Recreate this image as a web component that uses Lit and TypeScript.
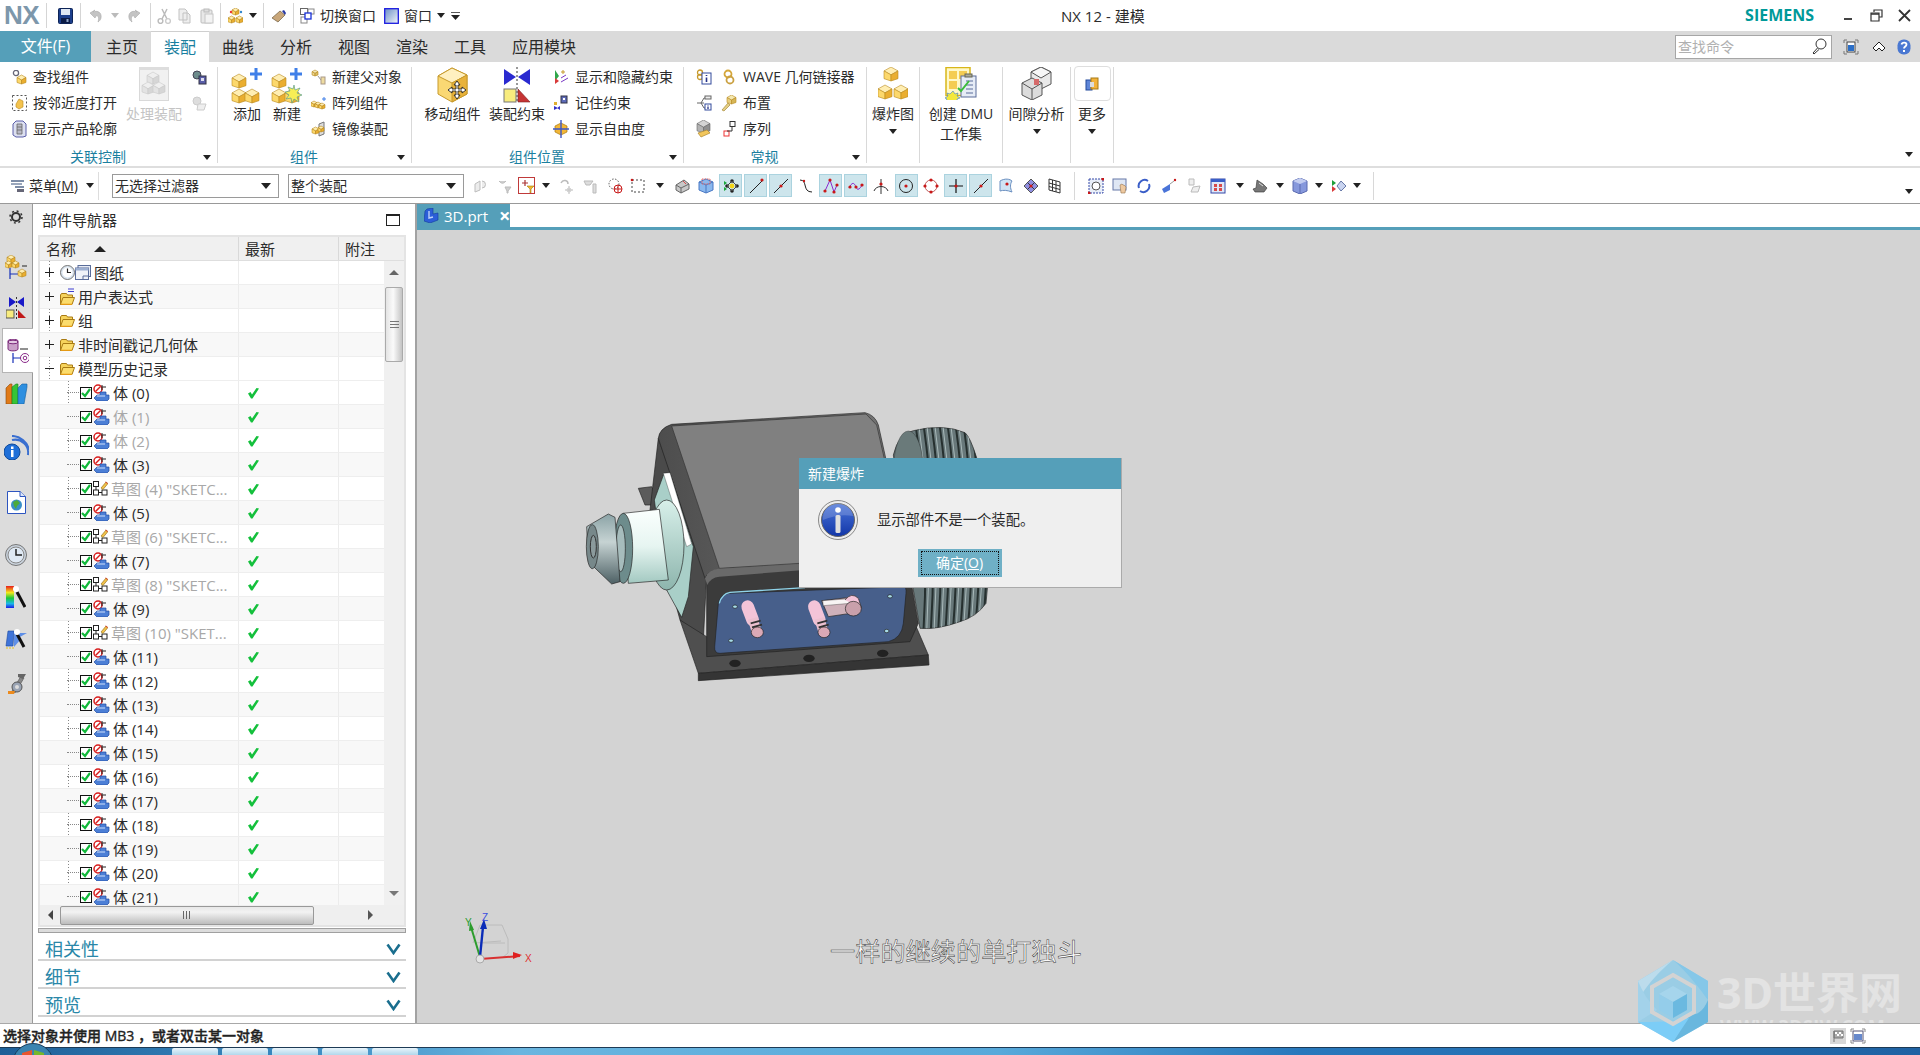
import { LitElement, css, html, svg } from 'lit';
import { customElement } from 'lit/decorators.js';

// --- icon helpers ---------------------------------------------------------
const ico = (w: number, h: number, body: unknown, vb = `0 0 ${w} ${h}`) =>
  html`<svg class="ico" width=${w} height=${h} viewBox=${vb}>${body}</svg>`;

const cube = (x: number, y: number, s: number, top = '#ffeeb2', l = '#fcd86c', r = '#eaae30', edge = '#b98a20') => {
  const h = s * 0.28;
  return svg`
    <polygon points=${`${x},${y + h} ${x + s / 2},${y} ${x + s},${y + h} ${x + s / 2},${y + 2 * h}`} fill=${top} stroke=${edge} stroke-width=".6"/>
    <polygon points=${`${x},${y + h} ${x + s / 2},${y + 2 * h} ${x + s / 2},${y + s} ${x},${y + s - h * 0.6}`} fill=${l} stroke=${edge} stroke-width=".6"/>
    <polygon points=${`${x + s},${y + h} ${x + s / 2},${y + 2 * h} ${x + s / 2},${y + s} ${x + s},${y + s - h * 0.6}`} fill=${r} stroke=${edge} stroke-width=".6"/>`;
};
const plus = (x: number, y: number, s = 10) =>
  svg`<path d=${`M${x - s / 2} ${y}H${x + s / 2}M${x} ${y - s / 2}V${y + s / 2}`} stroke="#3f7fe8" stroke-width="3"/>`;

const I = {
  save: ico(15, 16, svg`<rect x=".5" y=".5" width="14" height="15" rx="1" fill="#1c3f8c" stroke="#0e2456"/><rect x="3" y="1" width="9" height="6" fill="#dfe8f4"/><rect x="3" y="10" width="9" height="5" fill="#0b1b45"/><rect x="8.5" y="11" width="2" height="3" fill="#8fa5c8"/>`),
  undo: ico(14, 14, svg`<path d="M4 3C9 1 13 4 12 9c-.4 1.800-1.500 3-3 4 1-3 1-6-1.500-6.500L6 9 1 4l5-3z" fill="#c4c4c4" stroke="#aaa" stroke-width=".6"/>`),
  redo: ico(13, 14, svg`<path d="M9 3C4 1 0 4 1 9c.4 1.800 1.500 3 3 4-1-3-1-6 1.500-6.500L7 9l5-5-5-3z" fill="#c4c4c4" stroke="#aaa" stroke-width=".6"/>`),
  cut: ico(14, 16, svg`<path d="M10 1 5 11M5 1l5 10" stroke="#bbb" stroke-width="1.500"/><circle cx="3.500" cy="13" r="2.400" fill="none" stroke="#bbb" stroke-width="1.400"/><circle cx="11" cy="13" r="2.400" fill="none" stroke="#ccc" stroke-width="1.400"/>`),
  copy: ico(13, 16, svg`<path d="M1 1h6l2 2v9H1zM5 5h5l2 2v8H5z" fill="#eee" stroke="#c2c2c2"/>`),
  paste: ico(14, 16, svg`<rect x="1" y="2" width="11" height="13" rx="1" fill="#e8e8e8" stroke="#bdbdbd"/><rect x="4" y="1" width="5" height="3" fill="#ddd" stroke="#bbb"/><rect x="5" y="6" width="8" height="9" fill="#f3f3f3" stroke="#c6c6c6"/>`),
  cubes: ico(15, 16, svg`${cube(4, 0, 7)}${cube(0, 8, 7)}${cube(8, 8, 7)}<circle cx="3" cy="4" r="1.200" fill="#e33"/><circle cx="13" cy="4" r="1.200" fill="#38c"/>`),
  brush: ico(16, 14, svg`<path d="M1 9 9 2l5 4-7 7z" fill="#c9a77a" stroke="#6e5b3f" stroke-width=".7"/><path d="M11 2l2-1 2 3-1 2z" fill="#2738a5"/>`),
  switchWin: ico(15, 16, svg`<rect x=".5" y=".5" width="7" height="6" fill="#fff" stroke="#666"/><rect x="8" y="1" width="6" height="5" fill="#fff" stroke="#888"/><rect x="1" y="9" width="6" height="6" fill="#fff" stroke="#888"/><rect x="5" y="5" width="6" height="6" fill="#fff" stroke="#1730d8" stroke-width="1.300"/>`),
  window: html`<svg class="ico" width="15" height="16" viewBox="0 0 15 16"><defs><linearGradient id="wg" x1="0" y1="0" x2="1" y2="1"><stop offset="0" stop-color="#6b8fc6"/><stop offset="1" stop-color="#f3f7fb"/></linearGradient></defs><rect x=".7" y=".7" width="13.600" height="14.600" fill="url(#wg)" stroke="#1a1ae0" stroke-width="1.300"/></svg>`,

  find: ico(15, 15, svg`<circle cx="4" cy="3" r="2.600" fill="none" stroke="#667" stroke-width="1.300"/>${cube(5, 5, 9)}`),
  openProx: ico(15, 16, svg`<rect x=".5" y=".5" width="14" height="15" fill="none" stroke="#555" stroke-dasharray="2 2"/><path d="M4 9 7 4l4 2v6l-4 2-3-2z" fill="#f4c34f" stroke="#b98a20" stroke-width=".6"/>`),
  profile: ico(15, 18, svg`<path d="M4 1h7l3 3v12l-3 1H4l-3-2V4z" fill="#dcdff0" stroke="#5a5ea8"/><path d="M5 4h5v10H5zM5 7h5M5 10h5" fill="#b8b8c6" stroke="#666" stroke-width=".8"/>`),
  processBig: ico(30, 34, svg`<rect x=".5" y=".5" width="29" height="33" fill="#f1f1f1" stroke="#d9d9d9"/><rect x="0" y="0" width="30" height="3" fill="#ddd"/>${cube(8, 5, 12, '#efefef', '#e3e3e3', '#d6d6d6', '#c9c9c9')}${cube(3, 15, 12, '#efefef', '#e3e3e3', '#d6d6d6', '#c9c9c9')}${cube(14, 15, 12, '#efefef', '#e3e3e3', '#d6d6d6', '#c9c9c9')}`),
  navCam: ico(15, 15, svg`<circle cx="5" cy="5" r="4" fill="#6d8c8c" stroke="#445"/><rect x="7" y="6" width="7" height="8" fill="#5a5ea8" stroke="#334"/><rect x="9" y="8" width="3" height="3" fill="#dde"/>`),
  navDis: ico(15, 15, svg`<circle cx="5" cy="5" r="4" fill="#ddd" stroke="#ccc"/><path d="M6 8h8l-2 6H5z" fill="#eee" stroke="#ccc"/>`),
  add: ico(32, 38, svg`${cube(1, 7, 14)}${cube(1, 22, 14)}${cube(14, 22, 14)}${plus(25, 7, 12)}`, '0 0 32 38'),
  newComp: ico(32, 38, svg`${cube(1, 7, 14)}${cube(1, 22, 14)}${cube(14, 22, 14)}${plus(25, 7, 12)}<path d="M23 18l1 5 5-2-3 5 5 2-5 2 2 5-5-3-2 4-1-5-5 1 3-4-4-3 5-1-2-4 5 2z" fill="#f7ee55" stroke="#5f9f8f" stroke-width=".7"/>`, '0 0 32 38'),
  newParent: ico(15, 16, svg`${cube(1, 1, 6, '#f4e9b8', '#ead48a', '#d9bc62')}<path d="M7 7l6 8" stroke="#999"/><rect x="10" y="8" width="4" height="7" fill="#eedca0" stroke="#a98"/>`),
  array: ico(15, 14, svg`${cube(0, 5, 6)}${cube(4, 6, 6)}${cube(8, 7, 6)}<path d="M11 3h4M13 1v4" stroke="#3f7fe8"/>`),
  mirror: ico(15, 16, svg`<path d="M8 3l5-2v12l-5 2z" fill="#ddd" stroke="#777"/>${cube(1, 6, 7)}${cube(7, 5, 6)}`),
  move: ico(32, 36, svg`<polygon points="15,1 30,8 30,27 15,35 1,27 1,9" fill="#fad873" stroke="#c79a2c"/><polygon points="15,1 30,8 15,16 1,9" fill="#fff0c0" stroke="#c79a2c"/><polygon points="15,16 30,8 30,27 15,35" fill="#e8b23a" stroke="#c79a2c"/><path d="M20 14l3 4h-2v4h4v-2l4 3-4 3v-2h-4v4h2l-3 4-3-4h2v-4h-4v2l-4-3 4-3v2h4v-4h-2z" fill="#fff" stroke="#222" stroke-width=".9"/>`),
  constrain: ico(28, 36, svg`<path d="M1 2l12 8L1 18zM27 2 15 10l12 8z" fill="#2a2ad0"/><path d="M14 0v36" stroke="#333" stroke-dasharray="2 2"/><rect x="1" y="22" width="12" height="13" fill="#f8ec7e" stroke="#777"/><path d="M15 22l12 13H15z" fill="#c63434" stroke="#7c2222" stroke-width=".6"/>`),
  showHide: ico(16, 16, svg`<path d="M2 1v11l4-5z" fill="#2fa64a"/><path d="M2 15V9l4 3z" fill="#d83a3a"/><path d="M8 9l5-3M8 13l7-4" stroke="#7a39c5"/><path d="M10 1v4M8 3h4" stroke="#c79a2c"/>`),
  remember: ico(16, 16, svg`<rect x="8" y="1" width="6" height="7" fill="#5c6ab8" stroke="#334"/><rect x="10" y="3" width="2" height="2" fill="#fff"/><path d="M1 11l4 2-4 2zM7 11l-3 2 3 2z" fill="#3434c8"/><rect x="1" y="7" width="3" height="3" fill="#e0b030"/>`),
  dof: ico(16, 18, svg`<polygon points="8,3 14,6 14,12 8,15 2,12 2,6" fill="#f2b636" stroke="#a97a10" stroke-width=".7"/><path d="M8 0v18M0 9h16" stroke="#3d57c8" stroke-width="1.400"/>`),
  waveInfo: ico(16, 16, svg`<circle cx="4" cy="3.500" r="2.500" fill="none" stroke="#c79a2c" stroke-width="1.300"/><circle cx="4" cy="8" r="2.500" fill="none" stroke="#c79a2c" stroke-width="1.300"/><rect x="6" y="4" width="9" height="11" fill="#fff" stroke="#334a9c"/><path d="M10.500 6v1M10.500 8.500V13" stroke="#26338a" stroke-width="1.600"/>`),
  waveLink: ico(14, 17, svg`<circle cx="6" cy="5" r="3.500" fill="none" stroke="#d4a63a" stroke-width="1.800"/><circle cx="8" cy="11" r="3.500" fill="none" stroke="#caa040" stroke-width="1.800"/>`),
  treeInfo: ico(16, 16, svg`<path d="M1 8h7M5 8l3-5h3M5 8l3 5h2" stroke="#666" fill="none"/><rect x="9" y="1" width="6" height="3" fill="#eee" stroke="#666"/><rect x="9" y="9" width="6" height="6" fill="#fff" stroke="#334a9c"/><path d="M12 10.500v1M12 12v2" stroke="#26338a" stroke-width="1.300"/>`),
  layout: ico(16, 17, svg`${cube(6, 0, 9, '#f4e8b0', '#e9cf7e', '#d6b656')}<path d="M1 15 7 8l2 2-6 6z" fill="#e5cf85" stroke="#a98c3a" stroke-width=".7"/>`),
  seqBox: ico(16, 18, svg`${cube(1, 0, 13, '#d4d4d4', '#b3b3b3', '#8f8f8f', '#666')}<path d="M2 13l9-3 3 3-9 4z" fill="#f2c65c" stroke="#b08a2c" stroke-width=".7"/>`),
  seq: ico(13, 16, svg`<rect x="7" y=".5" width="5" height="5" fill="#fff" stroke="#333"/><rect x="1" y="10" width="5" height="5" fill="#fff" stroke="#e33"/><path d="M9 6v4H4" fill="none" stroke="#333"/>`),
  explode: ico(30, 33, svg`${cube(6, 0, 14)}${cube(0, 18, 14)}${cube(16, 18, 14)}`),
  dmu: ico(33, 33, svg`<rect x="1" y=".5" width="24" height="28" fill="#fff8c8" stroke="#d8b61a" stroke-width="1.500"/><rect x="4" y="4" width="8" height="8" fill="#f4cc52"/><rect x="14" y="4" width="8" height="8" fill="#f4cc52"/><rect x="4" y="14" width="8" height="8" fill="#f4cc52"/><rect x="16" y="9" width="15" height="21" fill="#e6ecf6" stroke="#5a6d9a"/><rect x="20" y="7" width="7" height="3" fill="#aa9" stroke="#665"/><path d="M21 14h7M21 18h7M21 22h7M21 26h7" stroke="#5a6d9a"/><path d="M8 24l2 3 3-1-1 3 3 2-3 1 1 3H0l2-3-2-1 3-2-1-3 3 1z" fill="#f3e83c" stroke="#3a7fd0" stroke-width=".6"/><path d="M13 21l3 3 8-10" fill="none" stroke="#3bbd3b" stroke-width="2"/>`),
  clearance: ico(31, 33, svg`<polygon points="20,0 30,5 30,17 20,22 10,17 10,5" fill="#e9e9e9" stroke="#555"/><polygon points="20,11 30,5 20,0 10,5" fill="#f7f7f7" stroke="#555"/><polygon points="11,11 21,16 21,28 11,33 1,28 1,16" fill="#dcdcdc" stroke="#555"/><path d="M11 22V33M11 22l10-6M11 22 1 16" stroke="#555"/><rect x="13" y="12" width="5" height="6" fill="#d56a6a"/>`),
  more: ico(14, 14, svg`<rect x="1" y="3" width="6" height="10" fill="#5f86d8" stroke="#234a9c"/><rect x="6" y="1" width="7" height="11" fill="#f3b23a" stroke="#a87a14"/><rect x="5" y="5" width="4" height="5" fill="#ddd"/>`),
  menu: ico(15, 14, svg`<rect x="1" y="1" width="13" height="2" fill="#7e8ea8"/><rect x="1" y="4" width="11" height="2" fill="#9aa7bc"/><rect x="5" y="7" width="9" height="2" fill="#7e8ea8"/><rect x="7" y="10" width="7" height="3" fill="#667"/>`),

  // navigator tree
  clock: ico(15, 15, svg`<circle cx="7.500" cy="7.500" r="7" fill="#d9e4ef" stroke="#777"/><circle cx="7.500" cy="7.500" r="5" fill="#fff"/><path d="M7.500 3.500v4H11" stroke="#222" fill="none" stroke-width="1.200"/>`),
  sheet: ico(16, 15, svg`<rect x="3" y=".5" width="12.500" height="11" fill="#e6ebf5" stroke="#5a6d9a"/><rect x=".5" y="3" width="13" height="11.500" fill="#f0f3f9" stroke="#5a6d9a"/><rect x=".5" y="3" width="13" height="2.500" fill="#9db0d2"/><path d="M8 11h5M8 11v3" stroke="#5a6d9a"/>`),
  folder: ico(15, 13, svg`<path d="M.5 12.500V3l1-1.500h5l1 1.500h5v2" fill="#f6d35c" stroke="#a87a14"/><path d="M.5 12.500 3 5.500h11.500l-2.500 7z" fill="#fbdc6c" stroke="#a87a14"/><path d="M1 12.500h11" stroke="#e59a14" stroke-width="1.500"/>`),
  folderExpr: ico(15, 17, svg`<path d="M8 1h6M8 3.500h6" stroke="#3f3fd0"/><g transform="translate(0 4)"><path d="M.5 12.500V3l1-1.500h5l1 1.500h5v2" fill="#f6d35c" stroke="#a87a14"/><path d="M.5 12.500 3 5.500h11.500l-2.500 7z" fill="#fbdc6c" stroke="#a87a14"/><path d="M1 12.500h11" stroke="#e59a14" stroke-width="1.500"/></g>`),
  checkBox: ico(12, 12, svg`<rect x=".5" y=".5" width="11" height="11" fill="#fff" stroke="#111"/><path d="M2 6l3 3 5-7" fill="none" stroke="#11b93a" stroke-width="2.200"/>`),
  body: ico(17, 17, svg`<circle cx="5" cy="5" r="4" fill="#fff" stroke="#d81e1e" stroke-width="1.500"/><path d="M2.500 7.500l5-5" stroke="#d81e1e" stroke-width="1.500"/><path d="M9 1v5M9 3h4" stroke="#222"/><path d="M7 8h6v3h3v4l-2 2H4l-3-3 3-3h3z" fill="#4c7fd6" stroke="#1f4aa0" stroke-width=".7"/><path d="M4 12h8" stroke="#cfe0fa"/>`),
  sketch: ico(15, 15, svg`<rect x=".5" y=".5" width="5" height="5" fill="#fff" stroke="#222"/><rect x=".5" y="9" width="5" height="5" fill="#fff" stroke="#222"/><rect x="9" y="9" width="5" height="5" fill="#fff" stroke="#222"/><path d="M3 6v3M6 11.500h3" stroke="#222"/><path d="M8 7l5-6 2 1.500-5 6z" fill="#f2c14a" stroke="#8a6a14" stroke-width=".6"/><path d="M12.500 1l2 1.500" stroke="#d33"/>`),
  ok: ico(12, 12, svg`<path d="M1 6.500l2.500-1.500L5 7.500 9.500 1 12 1.500 5.500 11.500H4z" fill="#14c03c"/>`),

  // left rail
  gear: ico(14, 14, svg`<circle cx="7" cy="7" r="4" fill="none" stroke="#333" stroke-width="2"/><circle cx="7" cy="7" r="6" fill="none" stroke="#333" stroke-width="1.500" stroke-dasharray="2 2.700"/>`),
  railAsm: ico(22, 24, svg`${cube(2, 0, 8)}${cube(0, 6, 7)}${cube(7, 6, 7)}<path d="M17 11h5" stroke="#222"/><path d="M5 13v11M5 19h8" stroke="#1730b8" stroke-width="1.200"/>${cube(13, 14, 8)}`),
  railCon: ico(21, 22, svg`<path d="M3 0l7 5-7 5zM18 0l-7 5 7 5z" fill="#1818c8"/><path d="M10.500 0v22" stroke="#333" stroke-dasharray="2 2"/><rect x="0" y="13" width="8" height="8" fill="#f8ec7e" stroke="#555"/><path d="M12 13l8 8h-8z" fill="#c01818"/>`),
  railPart: ico(22, 24, svg`<path d="M1 2c0-2.500 10-2.500 10 0v8c0 2.500-10 2.500-10 0z" fill="#c9a0c8" stroke="#7a2a7a"/><ellipse cx="6" cy="3" rx="5" ry="1.800" fill="#e2c9e2" stroke="#7a2a7a"/><path d="M13 10h8" stroke="#222"/><path d="M6 14v10M6 19h8" stroke="#1730b8" stroke-width="1.200"/><circle cx="18" cy="19" r="4.500" fill="#fff" stroke="#8a2a8a"/><circle cx="18" cy="19" r="1.800" fill="none" stroke="#8a2a8a"/>`),
  books: ico(23, 21, svg`<path d="M1 5 5 1h2v20H1z" fill="#e07a18" stroke="#8a4a0e" stroke-width=".6"/><path d="M7 4 11 1h2v20H7z" fill="#36c436" stroke="#1c7c1c" stroke-width=".6"/><path d="M13 5 17 1h5v3l-3 17h-6z" fill="#2e8fe0" stroke="#14609e" stroke-width=".6"/>`),
  infoWifi: ico(25, 25, svg`<path d="M8 5A13 13 0 0 1 24 20M8 1A18 18 0 0 1 25 15" fill="none" stroke="#3a6fd0" stroke-width="2.200"/><circle cx="8" cy="17" r="8" fill="#1f6fd8" stroke="#0f4a9a"/><rect x="7" y="15" width="2.500" height="7" fill="#fff"/><rect x="7" y="11.500" width="2.500" height="2.500" fill="#fff"/>`),
  pageGlobe: ico(19, 23, svg`<path d="M.5.5H13l5.500 5V22.500H.5z" fill="#fff" stroke="#2d55c0"/><path d="M13 .5v5h5.500" fill="#dbe6fa" stroke="#2d55c0"/><circle cx="9.500" cy="14" r="5.500" fill="#3a8fc8"/><path d="M6 11l4-2 3 3-3 3-1 3-2-3z" fill="#4caa3a"/>`),
  railClock: ico(22, 22, svg`<circle cx="11" cy="11" r="10.500" fill="#c9d2dc" stroke="#777"/><circle cx="11" cy="11" r="8" fill="#dfe9f4" stroke="#888"/><path d="M11 5v6h6" fill="none" stroke="#222" stroke-width="1.500"/>`),
  railColor: html`<svg class="ico" width="20" height="23" viewBox="0 0 20 23"><defs><linearGradient id="rb" x1="0" y1="0" x2="0" y2="1"><stop offset="0" stop-color="#e81c1c"/><stop offset=".3" stop-color="#f4e81c"/><stop offset=".55" stop-color="#1cc83a"/><stop offset=".8" stop-color="#1cb8e8"/><stop offset="1" stop-color="#1c1ce8"/></linearGradient></defs><rect x="0" y="0" width="8" height="22" fill="url(#rb)"/><path d="M11 6l8 15" stroke="#111" stroke-width="3"/><circle cx="10" cy="3" r="3" fill="#fff"/></svg>`,
  railWizard: ico(23, 22, svg`<path d="M3 3h6L8 18H1z" fill="#3f74d8" stroke="#1d49a0" stroke-width=".6"/><path d="M9 5h13l-9 5 3 1-7 8z" fill="#5f8fe6"/><path d="M12 6l7 13" stroke="#111" stroke-width="3"/><circle cx="12" cy="4" r="3" fill="#fff"/><path d="M1 20h8" stroke="#e3c020" stroke-dasharray="2 1"/>`),
  railTools: ico(19, 22, svg`<path d="M5 18 14 3l3 2-9 15z" fill="#888" stroke="#444" stroke-width=".5"/><path d="M11 1h8l-3 5-5-2z" fill="#666"/><circle cx="10" cy="14" r="5" fill="#9aa4b4" stroke="#555"/><circle cx="10" cy="14" r="2" fill="#dcdcdc"/><path d="M1 18h7l-1 3H1z" fill="#ec8a1c"/>`),
  tabPart: ico(15, 15, svg`<path d="M3 1 9 0v6l5-1v7l-8 3-6-2 1-10z" fill="#2c5ed8" stroke="#123a9e" stroke-width=".6"/><path d="M5 3v7l4-1" fill="none" stroke="#bcd0fa" stroke-width="1.400"/>`),
};

// toolbar glyphs, all in a 16 box
const tb = (b: unknown) => ico(16, 16, b);
const red = (x: number, y: number, r = 1.600) => svg`<circle cx=${x} cy=${y} r=${r} fill="#c81818"/>`;
const T = {
  g1: tb(svg`<path d="M2 6l5-3v9l-5 2zM9 3a3 3 0 1 1 0 7" fill="#ececec" stroke="#bdbdbd"/>`),
  g2: tb(svg`<path d="M2 3c3 3 4 3 7 0M8 9h6l-3 4v2h-1v-2z" fill="#cfcfcf" stroke="#bbb"/>`),
  filt: tb(svg`<path d="M6 2v6M3 5h6" stroke="#a33" stroke-width="1.200"/><path d="M8 8h7l-3 3v4h-1v-4z" fill="#f2b92c" stroke="#a87a14" stroke-width=".6"/>`),
  g3: tb(svg`<path d="M3 5c2-4 7-3 7 1" fill="none" stroke="#bbb" stroke-width="1.500"/><path d="M11 8v8M7 12h8" stroke="#bbb"/><circle cx="11" cy="12" r="2" fill="none" stroke="#ccc"/>`),
  g4: tb(svg`<path d="M2 3h9l-3 4H4zM11 6h3v9h-3z" fill="#ddd" stroke="#bbb"/>`),
  g5: tb(svg`<circle cx="7" cy="6" r="5" fill="none" stroke="#555" stroke-dasharray="1.500 1.500"/><circle cx="11" cy="11" r="4" fill="none" stroke="#c81818"/><path d="M7 11h8M11 7v8" stroke="#c81818"/>`),
  rect: tb(svg`<rect x="2" y="2" width="12" height="12" fill="none" stroke="#444" stroke-dasharray="2 2"/><circle cx="2" cy="2" r="1.300" fill="#c81818"/>`),
  solid: tb(svg`<path d="M2 7 10 2l5 4v5l-8 4-5-3z" fill="#c8c8c8" stroke="#666"/><path d="M2 7l5 3 8-4M7 10v5" stroke="#666" fill="none"/><path d="M9 3l3 3" stroke="#d84a4a"/>`),
  blue: tb(svg`<polygon points="8,1 15,4 15,12 8,15 1,12 1,4" fill="#8ab8ee" stroke="#4a78c4"/><path d="M1 4l7 3 7-3M8 7v8" stroke="#4a78c4" fill="none"/><rect x="4" y="1" width="8" height="5" fill="none" stroke="#e36a6a" stroke-dasharray="1.500 1"/>`),
  snap1: tb(svg`<path d="M1 3v4l3-2zM1 13V9l3 2z" fill="#18a838"/><circle cx="9" cy="3" r="1.800" fill="#222"/><circle cx="9" cy="13" r="1.800" fill="#222"/><circle cx="4" cy="8" r="1.800" fill="#222"/><circle cx="14" cy="8" r="1.800" fill="#222"/><circle cx="9" cy="8" r="2.400" fill="#f2d418"/><path d="M9 3l5 5-5 5-5-5z" fill="none" stroke="#444"/>`),
  lineEnd: tb(svg`<path d="M2 15 14 3" stroke="#222"/>${red(14, 2)}`),
  lineMid: tb(svg`<path d="M1 15 15 1" stroke="#222"/>${red(8, 8)}`),
  curve: tb(svg`<path d="M2 2c8 0 2 12 12 12" fill="none" stroke="#222"/>${red(6, 3, 1.200)}`),
  poly: tb(svg`<path d="M2 13 7 2l4 12 3-7" fill="none" stroke="#8a2ad0"/>${red(2, 13)}${red(7, 2)}${red(11, 14)}${red(14, 7)}`),
  spline: tb(svg`<path d="M1 10c3-6 5-6 7-1s4 1 7-3" fill="none" stroke="#8a2ad0"/>${red(2, 9)}${red(8, 9)}${red(14, 7)}`),
  tan: tb(svg`<path d="M1 13c2-6 12-6 14 0M8 1v15" fill="none" stroke="#333"/>${red(8, 6)}`),
  center: tb(svg`<circle cx="8" cy="8" r="6.500" fill="none" stroke="#222"/>${red(8, 8)}`),
  circ: tb(svg`<circle cx="8" cy="8" r="6" fill="none" stroke="#c05a5a"/>${red(8, 2)}${red(8, 14)}${red(2, 8)}${red(14, 8)}`),
  cross: tb(svg`<path d="M8 1v14M1 8h14" stroke="#111" stroke-width="1.200"/>${red(8, 8)}`),
  face: tb(svg`<path d="M2 3c5-3 10-2 12 0-2 3-2 7 0 11-5-2-9-2-12-1z" fill="#cfe3f4" stroke="#6a8fc0"/>${red(9, 6)}`),
  mesh: tb(svg`<polygon points="8,1 15,8 8,15 1,8" fill="#8f8fe0" stroke="#555"/><path d="M4.500 4.500l7 7M11.500 4.500l-7 7" stroke="#334"/>${red(8, 8)}`),
  grid: tb(svg`<path d="M3 1l11 3v11L3 12zM6.500 2v11M10 3v11M3 5l11 3M3 8.500l11 3" fill="none" stroke="#333"/>`),
  zoomFit: tb(svg`<rect x="1" y="1" width="14" height="14" fill="#e8eef8" stroke="#3448a8" stroke-dasharray="2 1"/><circle cx="8" cy="8" r="4" fill="#fff" stroke="#555"/>${red(1, 15)}${red(15, 1)}`),
  pan: tb(svg`<rect x="1" y="1" width="13" height="11" fill="#dfe7f4" stroke="#6678a8"/><path d="M8 7l2-1 1 1 1 0 2 2-1 6H9z" fill="#eec9a0" stroke="#96744e" stroke-width=".6"/>`),
  rot: tb(svg`<path d="M3 10a6 6 0 0 1 9-7M13 6a6 6 0 0 1-9 7" fill="none" stroke="#3a5ec8" stroke-width="2"/>`),
  persp: tb(svg`<path d="M1 11l8-5v6l-6 3z" fill="#4a74d8"/><path d="M9 6l4-3" stroke="#999"/>${red(14, 2, 1.200)}`),
  lite: tb(svg`<path d="M3 1h5v6H3zM7 9l7-1-2 6H5z" fill="#eee" stroke="#bbb"/><path d="M5 3v0M5 5v0" stroke="#999"/>`),
  layer: tb(svg`<rect x="1" y="1" width="14" height="14" fill="#dfe7f8" stroke="#3448a8"/><rect x="1" y="1" width="14" height="3" fill="#3a5ec8"/><rect x="4" y="6" width="3" height="3" fill="#d84a4a"/><rect x="9" y="6" width="3" height="3" fill="#d84a4a"/><rect x="4" y="10" width="3" height="3" fill="#d84a4a"/><rect x="9" y="10" width="3" height="3" fill="#d84a4a"/>`),
  shade: tb(svg`<path d="M5 2l6 4 4 4-3 4H3l-2-3 3-1z" fill="#777" stroke="#333" stroke-width=".6"/><path d="M7 5l4 3" stroke="#ddd"/>`),
  boxBlue: tb(svg`<polygon points="8,0 15,3 15,13 8,16 1,13 1,3" fill="#8698dc" stroke="#5a6ab0"/><polygon points="8,0 15,3 8,6 1,3" fill="#c3cdf0"/><path d="M8 6v10" stroke="#5a6ab0"/>`),
  dyn: tb(svg`<path d="M1 2v6l4-3z" fill="#1f9f3a"/><path d="M1 14V8l4 3z" fill="#d83a3a"/><polygon points="10,3 15,8 10,13 6,8" fill="#c9d4f0" stroke="#6678a8"/>`),
};

type TbItem = { x: number; icon?: unknown; hl?: boolean; boxed?: boolean; caret?: boolean; sep?: boolean };

const TOOLBAR: TbItem[] = [
  { x: 480, icon: T.g1 }, { x: 506, icon: T.g2 }, { x: 528, icon: T.filt, boxed: true }, { x: 545, caret: true },
  { x: 565, icon: T.g3 }, { x: 590, icon: T.g4 }, { x: 615, icon: T.g5 }, { x: 639, icon: T.rect }, { x: 659, caret: true },
  { x: 681, icon: T.solid }, { x: 705, icon: T.blue }, { x: 731, icon: T.snap1, hl: true }, { x: 755, icon: T.lineEnd, hl: true },
  { x: 781, icon: T.lineMid, hl: true }, { x: 805, icon: T.curve }, { x: 831, icon: T.poly, hl: true }, { x: 855, icon: T.spline, hl: true },
  { x: 882, icon: T.tan }, { x: 906, icon: T.center, hl: true }, { x: 931, icon: T.circ }, { x: 955, icon: T.cross, hl: true },
  { x: 981, icon: T.lineMid, hl: true }, { x: 1005, icon: T.face }, { x: 1031, icon: T.mesh }, { x: 1055, icon: T.grid },
  { x: 1075, sep: true }, { x: 1094, icon: T.zoomFit }, { x: 1120, icon: T.pan }, { x: 1144, icon: T.rot }, { x: 1169, icon: T.persp },
  { x: 1193, icon: T.lite }, { x: 1220, icon: T.layer }, { x: 1239, caret: true }, { x: 1260, icon: T.shade }, { x: 1280, caret: true },
  { x: 1300, icon: T.boxBlue }, { x: 1319, caret: true }, { x: 1339, icon: T.dyn }, { x: 1358, caret: true }, { x: 1373, sep: true },
];

type Row = { label: string; kind: 'body' | 'sketch'; dim?: boolean };
const ROWS: Row[] = Array.from({ length: 22 }, (_, n): Row => {
  if (n === 4 || n === 6 || n === 8) return { label: `草图 (${n}) "SKETC...`, kind: 'sketch', dim: true };
  if (n === 10) return { label: '草图 (10) "SKET...', kind: 'sketch', dim: true };
  return { label: `体 (${n})`, kind: 'body', dim: n === 1 || n === 2 };
});

const TABS = ['主页', '装配', '曲线', '分析', '视图', '渲染', '工具', '应用模块'];

@customElement('app-root')
export class AppRoot extends LitElement {
  static override styles = css`
    :host {
      display: block;
      position: relative;
      width: 1920px;
      height: 1055px;
      overflow: hidden;
      background: #fff;
      font-family: 'Open Sans', 'Noto Sans CJK SC', sans-serif;
      font-size: 14px;
      line-height: 20px;
      color: #2b2b2b;
    }
    .ico { display: block; flex: none; }
    .caret {
      display: block;
      flex: none;
      width: 0;
      height: 0;
      border-left: 4px solid transparent;
      border-right: 4px solid transparent;
      border-top: 5px solid #222;
    }

    /* title bar */
    .title { height: 31px; display: grid; grid-template-columns: 1061px auto 1fr; align-items: center; }
    .quick { display: flex; align-items: center; height: 31px; }
    .logo { width: 46px; padding-left: 4px; box-sizing: border-box; font: 700 26px/31px 'Liberation Sans', sans-serif; color: #7d97ab; letter-spacing: -0.5px; }
    .qsep { width: 1px; height: 25px; background: #d5d5d5; flex: none; }
    .qgap { display: flex; align-items: center; }
    .app-name { font-size: 15px; text-align: center; white-space: nowrap; }
    .brand { display: flex; align-items: center; justify-content: flex-end; }
    .siemens { font: 700 16px/31px 'Open Sans', sans-serif; color: #009999; margin-right: 20px; transform: scaleY(1.05); }
    .winbtn { width: 28px; display: flex; justify-content: center; }

    /* tab strip */
    .tabs { height: 31px; background: #dadada; display: flex; align-items: stretch; }
    .file { width: 91px; background: #559fb9; color: #fff; text-align: center; font-size: 16px; line-height: 30px; margin-right: 2px; }
    .tab { padding: 0 13px; font-size: 16px; line-height: 32px; }
    .tab.on { background: #fff; color: #1b7f9f; border-top: 1px solid #cfcfcf; line-height: 31px; }
    .tabs-end { margin-left: auto; display: flex; align-items: center; }
    .search { width: 157px; height: 24px; box-sizing: border-box; border: 1px solid #a6a6a6; background: #fff; display: flex; align-items: center; justify-content: space-between; padding: 0 4px 0 2px; color: #b0b0b0; }
    .tabs-end .cell { width: 25px; display: flex; justify-content: center; }

    /* ribbon */
    .ribbon { height: 106px; display: flex; box-sizing: border-box; border-bottom: 2px solid #dedede; padding-top: 2px; }
    .group {
      flex: none;
      height: 102px;
      display: flex;
      flex-direction: column;
      box-sizing: border-box;
      background: linear-gradient(#d9d9d9, #d9d9d9) right 3px / 1px 96px no-repeat;
    }
    .gbody { height: 84px; display: flex; align-items: flex-start; }
    .gfoot { height: 18px; display: flex; align-items: center; }
    .glabel { flex: 1; text-align: center; color: #1b7f9f; }
    .gcaret { width: 22px; display: flex; justify-content: center; }
    .col { display: flex; flex-direction: column; flex: none; }
    .small { height: 26px; display: flex; align-items: center; gap: 6px; white-space: nowrap; }
    .small .slot { width: 16px; display: flex; justify-content: center; flex: none; }
    .big { display: flex; flex-direction: column; align-items: center; flex: none; padding-top: 3px; }
    .big .pic { height: 37px; display: flex; align-items: flex-start; justify-content: center; }
    .big .txt { white-space: nowrap; text-align: center; }
    .big .caret { margin-top: 5px; }
    .off { color: #c4c4c4; }
    .morebox { width: 37px; height: 35px; margin-top: -1px; border: 1px solid #dedede; border-radius: 4px; box-sizing: border-box; display: flex; align-items: center; justify-content: center; }

    /* command toolbar */
    .toolbar { height: 36px; display: flex; align-items: center; box-sizing: border-box; border-bottom: 1px solid #999; }
    .menu { width: 99px; display: flex; align-items: center; gap: 4px; padding-left: 10px; box-sizing: border-box; border-right: 1px solid #ddd; height: 28px; }
    .menu .caret { margin-left: 4px; }
    .select { height: 24px; box-sizing: border-box; border: 1px solid #9a9a9a; display: flex; align-items: center; justify-content: space-between; padding: 0 7px 0 2px; }
    .select .caret { border-left-width: 5px; border-right-width: 5px; border-top-width: 6px; }
    .strip { display: flex; align-items: center; height: 34px; margin-left: 4px; flex: 1; }
    .tcell { display: flex; justify-content: center; align-items: center; flex: none; height: 34px; }
    .tcell.sep::after { content: ''; width: 1px; height: 28px; background: #d8d8d8; }
    .hl { width: 23px; height: 23px; box-sizing: border-box; background: #cde5ec; border: 1px solid #abd3df; display: flex; align-items: center; justify-content: center; }
    .boxed { width: 17px; height: 17px; box-sizing: border-box; border: 1px solid #c03a3a; display: flex; align-items: center; justify-content: center; overflow: hidden; }
    .end-caret { margin-left: auto; margin-right: 7px; margin-top: 12px; }

    /* work area */
    .work { height: 819px; display: flex; }
    .rail { width: 33px; flex: none; box-sizing: border-box; background: #dcdcdc; border-right: 1px solid #9a9a9a; display: flex; flex-direction: column; align-items: center; }
    .rail .r { width: 100%; display: flex; justify-content: center; align-items: center; flex: none; }
    .rail .r.on { background: #fff; margin-left: 2px; width: 31px; margin-right: -1px; height: 45px; border: 1px solid #b5b5b5; border-right: none; box-sizing: border-box; }

    .panel { width: 382px; flex: none; display: flex; flex-direction: column; padding: 0 9px 0 5px; box-sizing: border-box; background: #fff; }
    .phead { height: 31px; display: flex; align-items: center; justify-content: space-between; padding: 0 6px 0 4px; font-size: 15px; box-sizing: border-box; }
    .maxbox { width: 14px; height: 12px; box-sizing: border-box; border: 1px solid #222; border-top-width: 2px; }

    .table { height: 692px; box-sizing: border-box; border: 2px solid #e4e4e4; display: flex; flex-direction: column; font-size: 15px; }
    .thead { height: 24px; flex: none; display: grid; grid-template-columns: 199px 100px 1fr; background: #f0f0f0; border-bottom: 1px solid #dedede; box-sizing: border-box; }
    .th { display: flex; align-items: center; padding-left: 6px; border-right: 1px solid #d9d9d9; gap: 18px; }
    .th:last-child { border-right: none; }
    .up { width: 0; height: 0; border-left: 6px solid transparent; border-right: 6px solid transparent; border-bottom: 6px solid #222; }
    .tmain { flex: 1; display: flex; min-height: 0; }
    .rows { flex: 1; overflow: hidden; }
    .row { height: 24px; box-sizing: border-box; display: grid; grid-template-columns: 199px 100px 1fr; border-bottom: 1px solid #eeeeee; }
    .row:nth-child(even) { background: #f8f8f8; }
    .row > div { border-right: 1px solid #ececec; display: flex; align-items: center; }
    .row > div:last-child { border-right: none; }
    .name { white-space: nowrap; overflow: hidden; }
    .dim { color: #a8a8a8; }
    .exp { width: 11px; height: 11px; margin: 0 5px 0 4px; flex: none; }
    .l1 .label { margin-left: 3px; }
    .hook { width: 12px; margin-left: 27px; border-top: 1px dotted #888; flex: none; }
    .l2 { gap: 1px; }
    .l2 .label { margin-left: 2px; }
    .late { padding-left: 8px; }
    .l2wrap { background: repeating-linear-gradient(#888 0 1px, transparent 1px 3px) 28px 0 / 1px 100% no-repeat; }
    .l1wrap { background: repeating-linear-gradient(#888 0 1px, transparent 1px 3px) 9px 0 / 1px 100% no-repeat; }

    .vbar { width: 20px; flex: none; background: #f0f0f0; display: flex; flex-direction: column; align-items: center; }
    .arrow-up { width: 0; height: 0; border-left: 5px solid transparent; border-right: 5px solid transparent; border-bottom: 5px solid #666; margin-top: 9px; }
    .arrow-dn { width: 0; height: 0; border-left: 5px solid transparent; border-right: 5px solid transparent; border-top: 5px solid #777; margin-top: auto; margin-bottom: 9px; }
    .vthumb { width: 18px; height: 75px; margin-top: 12px; box-sizing: border-box; border: 1px solid #aaa; border-radius: 2px; background: linear-gradient(90deg, #e4e4e4, #fafafa 45%, #c4c4c4); display: flex; align-items: center; justify-content: center; }
    .grip-h { width: 9px; height: 8px; background: repeating-linear-gradient(#777 0 1px, transparent 1px 3px); }
    .hbar { height: 20px; flex: none; background: #efefef; display: flex; align-items: center; }
    .arrow-l { width: 0; height: 0; border-top: 5px solid transparent; border-bottom: 5px solid transparent; border-right: 5px solid #444; margin: 0 7px 0 8px; }
    .arrow-r { width: 0; height: 0; border-top: 5px solid transparent; border-bottom: 5px solid transparent; border-left: 5px solid #555; margin-left: 54px; }
    .hthumb { width: 254px; height: 19px; box-sizing: border-box; border: 1px solid #999; border-radius: 2px; background: linear-gradient(#e8e8e8, #f2f2f2 30%, #bdbdbd); display: flex; align-items: center; justify-content: center; }
    .grip-v { width: 9px; height: 8px; background: repeating-linear-gradient(90deg, #666 0 1px, transparent 1px 3px); }
    .split { height: 5px; margin-top: 1px; flex: none; box-sizing: border-box; border: 1px solid #a0a0a0; background: #dcdcdc; }
    .acc { height: 28px; flex: none; box-sizing: border-box; border-bottom: 2px solid #d2d2d2; display: flex; align-items: center; justify-content: space-between; padding: 5px 5px 0 7px; color: #2a87a8; font-size: 18px; }

    .view { flex: 1; min-width: 0; display: flex; flex-direction: column; border-left: 2px solid #a2a2a2; position: relative; }
    .vtabs { height: 26px; flex: none; display: flex; border-bottom: 3px solid #559fb9; box-sizing: border-box; }
    .vtab { width: 93px; background: #559fb9; color: #fff; display: flex; align-items: center; gap: 5px; padding-left: 7px; box-sizing: border-box; font-size: 15px; }
    .vtab .x { margin-left: 6px; font-weight: 700; font-size: 20px; }
    .canvas { flex: 1; background: #d3d3d3; }

    .model { position: absolute; left: 143px; top: 186px; }
    .triad { position: absolute; left: 46px; top: 709px; }
    .subtitle {
      position: absolute;
      left: 413px;
      top: 729px;
      font: 25.2px/34px 'Noto Sans CJK SC', sans-serif;
      color: #fafafa;
      -webkit-text-stroke: 0.5px #333;
      white-space: nowrap;
    }

    .dialog { position: absolute; left: 382px; top: 254px; width: 323px; height: 130px; box-sizing: border-box; background: #efefef; border-right: 1px solid #aaa; border-bottom: 1px solid #aaa; display: flex; flex-direction: column; }
    .dtitle { height: 31px; flex: none; background: #559fb9; color: #fff; font-size: 14px; line-height: 32px; padding-left: 9px; }
    .dmsg { display: flex; align-items: center; gap: 19px; padding: 12px 0 0 19px; height: 50px; box-sizing: border-box; font-size: 14.3px; }
    .dbtns { display: flex; justify-content: center; padding-top: 10px; margin-left: -1px; }
    .dbtn { width: 84px; height: 28px; box-sizing: border-box; background: #6fb0c6; padding: 2px 3px; color: #fff; }
    .dbtn span { display: block; height: 100%; box-sizing: border-box; border: 1px dotted #111; text-align: center; line-height: 22px; }
    .dbtn u { text-decoration-thickness: 1px; }

    /* status + taskbar */
    .status { height: 24px; box-sizing: border-box; background: #fff; border-top: 1px solid #a8a8a8; display: flex; align-items: center; padding: 0 54px 0 3px; font-weight: 500; color: #222; -webkit-text-stroke: 0.35px #222; position: relative; z-index: 2; }
    .status .sp { margin-left: auto; display: flex; gap: 4px; align-items: center; }
    .taskbar { height: 8px; position: relative; z-index: 3; display: flex; padding-left: 172px; gap: 4px; border-top: 1px solid #1d3a55; box-sizing: border-box; background: linear-gradient(90deg, #1e5f97 0, #3a8ac2 300px, #6ab5df 520px, #58a9da 1000px, #2878bc 1300px, #1f62a3 1920px); }
    .tbtn { width: 46px; height: 8px; background: linear-gradient(#eaf4fa, #a9d4ea); border-radius: 2px 2px 0 0; flex: none; }
    .orb { position: absolute; left: 12px; top: -5px; }

    .mark { position: absolute; left: 1637px; top: 960px; z-index: 3; }
    .marktext { position: absolute; left: 1717px; top: 969px; z-index: 1; font: 700 43px/48px 'Noto Sans', 'Noto Sans CJK SC', sans-serif; color: #e3e3e3; white-space: nowrap; }
    .markurl { position: absolute; left: 1720px; top: 1017px; z-index: 1; font: 700 18px/18px 'Noto Sans', sans-serif; letter-spacing: 0.5px; color: #e3e3e3; white-space: nowrap; }
  `;

  private small(icon: unknown, text: string, cls = '') {
    return html`<div class="small ${cls}"><span class="slot">${icon}</span><span>${text}</span></div>`;
  }

  private big(pic: unknown, lines: string[], opts: { caret?: boolean; w: number; off?: boolean }) {
    return html`<div class="big ${opts.off ? 'off' : ''}" style="width:${opts.w}px">
      <div class="pic">${pic}</div>
      ${lines.map((l) => html`<div class="txt">${l}</div>`)}
      ${opts.caret ? html`<span class="caret"></span>` : ''}
    </div>`;
  }

  private foot(label = '', caret = true) {
    return html`<div class="gfoot">
      <div class="glabel">${label}</div>
      ${caret ? html`<div class="gcaret"><span class="caret"></span></div>` : ''}
    </div>`;
  }

  private renderTitle() {
    return html`<div class="title">
      <div class="quick">
        <div class="logo">NX</div><div class="qsep"></div>
        <div class="qgap" style="margin-left:11px">${I.save}</div>
        <div class="qgap" style="margin-left:7px"><div class="qsep"></div></div>
        <div class="qgap" style="margin-left:8px">${I.undo}</div>
        <div class="qgap" style="margin-left:8px"><span class="caret" style="border-top-color:#bbb"></span></div>
        <div class="qgap" style="margin-left:9px">${I.redo}</div>
        <div class="qgap" style="margin-left:9px"><div class="qsep"></div></div>
        <div class="qgap" style="margin-left:6px">${I.cut}</div>
        <div class="qgap" style="margin-left:7px">${I.copy}</div>
        <div class="qgap" style="margin-left:9px">${I.paste}</div>
        <div class="qgap" style="margin-left:6px"><div class="qsep"></div></div>
        <div class="qgap" style="margin-left:7px">${I.cubes}</div>
        <div class="qgap" style="margin-left:6px"><span class="caret"></span></div>
        <div class="qgap" style="margin-left:6px"><div class="qsep"></div></div>
        <div class="qgap" style="margin-left:7px">${I.brush}</div>
        <div class="qgap" style="margin-left:6px"><div class="qsep"></div></div>
        <div class="qgap" style="margin-left:6px">${I.switchWin}</div>
        <div class="qgap" style="margin-left:5px">切换窗口</div>
        <div class="qgap" style="margin-left:8px">${I.window}</div>
        <div class="qgap" style="margin-left:5px">窗口</div>
        <div class="qgap" style="margin-left:5px"><span class="caret"></span></div>
        <div class="qgap" style="margin-left:6px"><svg width="9" height="8" viewBox="0 0 9 8"><path d="M0 0h9" stroke="#222" stroke-width="1.500"/><path d="M0 3h9L4.500 8z" fill="#222"/></svg></div>
      </div>
      <div class="app-name">NX 12 - 建模</div>
      <div class="brand">
        <div class="siemens">SIEMENS</div>
        <div class="winbtn"><svg width="10" height="10" viewBox="0 0 10 10"><path d="M1 8h8" stroke="#444" stroke-width="2"/></svg></div>
        <div class="winbtn"><svg width="13" height="13" viewBox="0 0 13 13"><path d="M4 3V1h8v7H9.500M1 4h8v8H1z" fill="none" stroke="#333" stroke-width="1.200"/><path d="M1 5h8" stroke="#333" stroke-width="1.500"/></svg></div>
        <div class="winbtn" style="margin-right:2px"><svg width="13" height="13" viewBox="0 0 13 13"><path d="M1 1l11 11M12 1 1 12" stroke="#333" stroke-width="1.800"/></svg></div>
      </div>
    </div>`;
  }

  private renderTabs() {
    return html`<div class="tabs">
      <div class="file">文件(F)</div>
      ${TABS.map((t) => html`<div class="tab ${t === '装配' ? 'on' : ''}">${t}</div>`)}
      <div class="tabs-end">
        <div class="search"><span>查找命令</span>
          <svg width="15" height="17" viewBox="0 0 15 17"><circle cx="9" cy="6" r="5" fill="#fff" stroke="#333"/><path d="M5.500 10 1 15l1 1 5-4.500" fill="#fff" stroke="#333"/></svg>
        </div>
        <div class="cell" style="margin-left:6px"><svg width="16" height="16" viewBox="0 0 16 16"><path d="M1 4V1h3M12 1h3v3M15 12v3h-3M4 15H1v-3" fill="none" stroke="#777"/><rect x="4" y="3" width="8" height="10" fill="#fff" stroke="#444"/><rect x="5" y="6" width="6" height="6" fill="#2c6fc8"/></svg></div>
        <div class="cell" style="margin-left:3px"><svg width="14" height="12" viewBox="0 0 14 12"><path d="M1 7l6-6 6 6-3 3-3-3-3 3z" fill="#fff" stroke="#222"/></svg></div>
        <div class="cell" style="margin:0 4px 0 0"><svg width="14" height="16" viewBox="0 0 14 16"><rect x=".5" y=".5" width="13" height="15" rx="6" fill="#4a78d2"/><path d="M4.500 5.500C5 3 9.500 3 9.500 5.500 9.500 7.500 7 7.500 7 9.500" fill="none" stroke="#fff" stroke-width="1.800"/><rect x="6" y="11" width="2" height="2" fill="#fff"/></svg></div>
      </div>
    </div>`;
  }

  private renderRibbon() {
    return html`<div class="ribbon">
      <div class="group" style="width:218px">
        <div class="gbody" style="padding-left:11px">
          <div class="col" style="width:115px">
            ${this.small(I.find, '查找组件')}${this.small(I.openProx, '按邻近度打开')}${this.small(I.profile, '显示产品轮廓')}
          </div>
          ${this.big(I.processBig, ['处理装配'], { w: 56, off: true })}
          <div class="col" style="margin-left:9px">${this.small(I.navCam, '')}${this.small(I.navDis, '')}</div>
        </div>
        ${this.foot('关联控制')}
      </div>
      <div class="group" style="width:194px">
        <div class="gbody" style="padding-left:13px">
          ${this.big(I.add, ['添加'], { w: 32 })}
          <div style="width:8px"></div>
          ${this.big(I.newComp, ['新建'], { w: 32 })}
          <div class="col" style="margin-left:7px">
            ${this.small(I.newParent, '新建父对象')}${this.small(I.array, '阵列组件')}${this.small(I.mirror, '镜像装配')}
          </div>
        </div>
        ${this.foot('组件')}
      </div>
      <div class="group" style="width:272px">
        <div class="gbody" style="padding-left:12px">
          ${this.big(I.move, ['移动组件'], { w: 57 })}
          <div style="width:8px"></div>
          ${this.big(I.constrain, ['装配约束'], { w: 56 })}
          <div class="col" style="margin-left:8px">
            ${this.small(I.showHide, '显示和隐藏约束')}${this.small(I.remember, '记住约束')}${this.small(I.dof, '显示自由度')}
          </div>
        </div>
        ${this.foot('组件位置')}
      </div>
      <div class="group" style="width:183px">
        <div class="gbody" style="padding-left:12px">
          <div class="col" style="width:25px">${this.small(I.waveInfo, '')}${this.small(I.treeInfo, '')}${this.small(I.seqBox, '')}</div>
          <div class="col">${this.small(I.waveLink, 'WAVE 几何链接器')}${this.small(I.layout, '布置')}${this.small(I.seq, '序列')}</div>
        </div>
        ${this.foot('常规')}
      </div>
      <div class="group" style="width:53px">
        <div class="gbody">${this.big(I.explode, ['爆炸图'], { w: 52, caret: true })}</div>
      </div>
      <div class="group" style="width:83px">
        <div class="gbody">${this.big(I.dmu, ['创建 DMU', '工作集'], { w: 82 })}</div>
      </div>
      <div class="group" style="width:68px">
        <div class="gbody">${this.big(I.clearance, ['间隙分析'], { w: 67, caret: true })}</div>
      </div>
      <div class="group" style="width:43px">
        <div class="gbody">
          <div class="big" style="width:42px">
            <div class="pic"><div class="morebox">${I.more}</div></div>
            <div class="txt">更多</div>
            <span class="caret"></span>
          </div>
        </div>
      </div>
      <div style="margin:88px 7px 0 auto"><span class="caret"></span></div>
    </div>`;
  }

  private renderToolbar() {
    const start = 470;
    return html`<div class="toolbar">
      <div class="menu">${I.menu}<span>菜单(<u>M</u>)</span><span class="caret"></span></div>
      <div class="select" style="width:167px;margin-left:13px">无选择过滤器<span class="caret"></span></div>
      <div class="select" style="width:176px;margin-left:9px">整个装配<span class="caret"></span></div>
      <div class="strip">
        ${TOOLBAR.map((it, i) => {
          const left = i === 0 ? start - 2 : (TOOLBAR[i - 1].x + it.x) / 2;
          const next = i === TOOLBAR.length - 1 ? it.x + 8 : (it.x + TOOLBAR[i + 1].x) / 2;
          const body = it.caret ? html`<span class="caret"></span>` : it.hl ? html`<div class="hl">${it.icon}</div>` : it.boxed ? html`<div class="boxed">${it.icon}</div>` : it.icon;
          return html`<div class="tcell ${it.sep ? 'sep' : ''}" style="width:${next - left}px">${body}</div>`;
        })}
        <span class="caret end-caret"></span>
      </div>
    </div>`;
  }

  private renderRail() {
    return html`<div class="rail">
      <div class="r" style="height:26px">${I.gear}</div>
      <div class="r" style="height:46px;margin-top:14px">${I.railAsm}</div>
      <div class="r" style="height:32px;margin-top:2px">${I.railCon}</div>
      <div class="r on" style="margin-top:4px">${I.railPart}</div>
      <div class="r" style="height:40px">${I.books}</div>
      <div class="r" style="height:34px;margin-top:17px">${I.infoWifi}</div>
      <div class="r" style="height:34px;margin-top:21px">${I.pageGlobe}</div>
      <div class="r" style="height:34px;margin-top:19px">${I.railClock}</div>
      <div class="r" style="height:34px;margin-top:8px">${I.railColor}</div>
      <div class="r" style="height:34px;margin-top:8px">${I.railWizard}</div>
      <div class="r" style="height:34px;margin-top:11px">${I.railTools}</div>
    </div>`;
  }

  private expander(open: boolean) {
    return html`<svg class="exp" viewBox="0 0 11 11"><path d="M1 5.500h9" stroke="#222"/>${open ? '' : svg`<path d="M5.500 1v9" stroke="#222"/>`}</svg>`;
  }

  private top(icons: unknown[], label: string, open = false) {
    return html`<div class="row l1">
      <div class="name">${this.expander(open)}${icons}<span class="label">${label}</span></div><div></div><div></div>
    </div>`;
  }

  private renderTable() {
    return html`<div class="table">
      <div class="thead">
        <div class="th">名称<span class="up"></span></div>
        <div class="th">最新</div>
        <div class="th">附注</div>
      </div>
      <div class="tmain">
        <div class="rows">
          <div class="l1wrap" style="height:120px">
            ${this.top([I.clock, I.sheet], '图纸')}
            ${this.top([I.folderExpr], '用户表达式')}
            ${this.top([I.folder], '组')}
            ${this.top([I.folder], '非时间戳记几何体')}
            ${this.top([I.folder], '模型历史记录', true)}
          </div>
          <div class="l2wrap">
            ${ROWS.map((r) => html`<div class="row">
              <div class="name l2 ${r.dim ? 'dim' : ''}">
                <span class="hook"></span>${I.checkBox}${r.kind === 'body' ? I.body : I.sketch}<span class="label">${r.label}</span>
              </div>
              <div class="late">${I.ok}</div><div></div>
            </div>`)}
          </div>
        </div>
        <div class="vbar">
          <span class="arrow-up"></span>
          <div class="vthumb"><span class="grip-h"></span></div>
          <span class="arrow-dn"></span>
        </div>
      </div>
      <div class="hbar">
        <span class="arrow-l"></span>
        <div class="hthumb"><span class="grip-v"></span></div>
        <span class="arrow-r"></span>
      </div>
    </div>`;
  }

  private renderPanel() {
    const chev = html`<svg width="15" height="12" viewBox="0 0 15 12"><path d="M1.500 1.500 7.500 10l6-8.500" fill="none" stroke="#1a6e8e" stroke-width="2.600"/></svg>`;
    return html`<div class="panel">
      <div class="phead"><span>部件导航器</span><span class="maxbox"></span></div>
      ${this.renderTable()}
      <div class="split"></div>
      ${['相关性', '细节', '预览'].map((t) => html`<div class="acc"><span>${t}</span>${chev}</div>`)}
    </div>`;
  }

  private renderModel() {
    const fins = Array.from({ length: 9 }, (_, i) => i);
    return html`<svg class="model" width="440" height="300" viewBox="0 0 1320 900">
      <defs>
        <linearGradient id="cyl" x1="0" y1="0" x2="0" y2="1"><stop offset="0" stop-color="#fbfffe"/><stop offset=".5" stop-color="#e6f5f1"/><stop offset="1" stop-color="#a3c9c1"/></linearGradient>
        <linearGradient id="cone" x1="0" y1="0" x2="0" y2="1"><stop offset="0" stop-color="#8ba3a6"/><stop offset=".4" stop-color="#c6d3d3"/><stop offset="1" stop-color="#4d6064"/></linearGradient>
        <linearGradient id="disc" x1="0" y1="0" x2="0" y2="1"><stop offset="0" stop-color="#d8f0ea"/><stop offset="1" stop-color="#8db5ad"/></linearGradient>
        <linearGradient id="bev" x1="0" y1="0" x2="1" y2="0"><stop offset="0" stop-color="#4d4d4d"/><stop offset="1" stop-color="#777"/></linearGradient>
        <clipPath id="finclip"><path d="M1000 195Q1015 130 1060 122Q1150 100 1215 128Q1245 150 1300 400L1278 640Q1250 680 1200 695Q1130 720 1080 715L1060 600Z"/></clipPath>
      </defs>
      <path d="M1000 195Q1015 130 1060 122Q1150 100 1215 128Q1245 150 1300 400L1278 640Q1250 680 1200 695Q1130 720 1080 715L1060 600Z" fill="#68787a" stroke="#222" stroke-width="2"/>
      <g clip-path="url(#finclip)">
        ${fins.map((i) => svg`
          <path d=${`M${1066 + i * 24} 100 Q${1110 + i * 24} 400 ${1090 + i * 22} 730`} fill="none" stroke="#26302f" stroke-width="6"/>
          <path d=${`M${1076 + i * 24} 100 Q${1120 + i * 24} 400 ${1100 + i * 22} 730`} fill="none" stroke="#b6c6c6" stroke-width="2.500"/>`)}
      </g>
      <ellipse cx="1045" cy="235" rx="44" ry="112" fill="#6a7a7a" stroke="#222"/>
      <polygon points="235,295 275,290 300,345 255,345" fill="#5b5b5b" stroke="#222" stroke-width="2"/>
      <polygon points="295,145 440,555 430,750 360,690 270,360" fill="#4a4a4a" stroke="#222" stroke-width="2"/>
      <polygon points="360,690 440,740 1060,690 1105,795 415,850" fill="#4f4f4f" stroke="#222" stroke-width="2"/>
      <polygon points="415,850 1105,795 1107,825 415,872" fill="#353535" stroke="#222" stroke-width="2"/>
      <ellipse cx="525" cy="820" rx="17" ry="11" fill="#222"/>
      <ellipse cx="747" cy="805" rx="17" ry="11" fill="#222"/>
      <ellipse cx="968" cy="790" rx="17" ry="11" fill="#222"/>
      <polygon points="440,575 475,535 1040,500 1075,700 1050,755 440,800" fill="#3b3b3b" stroke="#222" stroke-width="2"/>
      <path d="M295 145 Q298 115 335 103 L915 68 Q945 75 955 105 L1045 510 L475 540 Q445 540 435 565 Z" fill="url(#bev)" stroke="#222" stroke-width="2"/>
      <polygon points="335,108 918,72 950,105 1040,500 478,535" fill="#808080" stroke="#333" stroke-width="2"/>
      <path d="M435 565Q445 538 478 536L1040 505 1044 516 478 560Q452 562 442 585Z" fill="#6a6a6a"/>
      <path d="M505 610 1030 590Q1040 590 1038 610L1030 700Q1025 745 985 755L480 790Q462 790 464 770L475 640Q480 615 505 610Z" fill="#475f8b" stroke="#222" stroke-width="2"/>
      <path d="M478 640Q485 612 510 607L735 593" fill="none" stroke="#8fd4ea" stroke-width="4"/>
      ${[[525, 650], [513, 752], [990, 619], [980, 723]].map(([x, y]) => svg`<ellipse cx=${x} cy=${y} rx="7" ry="5" fill="#a7dce8" stroke="#222" stroke-width="2"/>`)}
      ${[0, 200].map((dx) => svg`<g transform=${`translate(${dx} 0)`}>
        <path d="M563 650 578 690" stroke="#f3c4d8" stroke-width="38" stroke-linecap="round"/>
        <path d="M578 685 590 725" stroke="#ecc0d0" stroke-width="30"/>
        <path d="M572 700 602 692M576 712 606 704" stroke="#333" stroke-width="5"/>
        <ellipse cx="592" cy="727" rx="18" ry="16" fill="#dba9b6" stroke="#222" stroke-width="2"/></g>`)}
      <polygon points="785,632 870,622 885,668 805,680" fill="#cfb1ba" stroke="#222" stroke-width="2"/>
      <polygon points="788,632 868,626 870,640 790,647" fill="#f8f4f4" stroke="#222"/>
      <path d="M855 630Q875 605 895 625L905 655" fill="#f3c4d8" stroke="#222" stroke-width="2"/>
      <ellipse cx="880" cy="656" rx="24" ry="22" fill="#c9a0ab" stroke="#222" stroke-width="2"/>
      <polygon points="312,250 330,250 400,470 385,620 365,682 320,600 283,330" fill="#a9cfc8" stroke="#222" stroke-width="2"/>
      <polygon points="310,250 330,248 395,462 380,470" fill="#fff" stroke="#222"/>
      <ellipse cx="320" cy="465" rx="52" ry="135" fill="url(#disc)" stroke="#222" stroke-width="2"/>
      <polygon points="190,370 298,358 325,570 205,580" fill="url(#cyl)" stroke="#222" stroke-width="2"/>
      <ellipse cx="190" cy="475" rx="28" ry="105" fill="#6d8c8c" stroke="#222" stroke-width="2"/>
      <ellipse cx="182" cy="475" rx="14" ry="70" fill="#a6bcbc" stroke="#222" stroke-width="2"/>
      <polygon points="145,372 165,382 180,575 155,582 85,515 80,410" fill="url(#cone)" stroke="#222" stroke-width="2"/>
      <ellipse cx="97" cy="470" rx="18" ry="66" fill="#77888a" stroke="#222" stroke-width="2"/>
      <ellipse cx="100" cy="470" rx="9" ry="34" fill="#8b9a9c" stroke="#333" stroke-width="3"/>
    </svg>`;
  }

  private renderDialog() {
    return html`<div class="dialog">
      <div class="dtitle">新建爆炸</div>
      <div class="dmsg">
        <svg class="ico" width="40" height="40" viewBox="0 0 40 40">
          <defs><linearGradient id="ib" x1="0" y1="0" x2="0" y2="1"><stop offset="0" stop-color="#4a74d8"/><stop offset="1" stop-color="#1236a8"/></linearGradient></defs>
          <circle cx="20" cy="20" r="19.500" fill="#eee" stroke="#888"/><circle cx="20" cy="20" r="16.500" fill="url(#ib)" stroke="#666"/>
          <path d="M5 20a15 15 0 0 1 30-4c-10-2-20 0-30 4z" fill="#fff" opacity=".18"/>
          <circle cx="20" cy="10" r="2.800" fill="#fff"/><rect x="17.500" y="15" width="5" height="18" rx="1.500" fill="#dfdfdf"/>
        </svg>
        <span>显示部件不是一个装配。</span>
      </div>
      <div class="dbtns"><div class="dbtn"><span>确定(<u>O</u>)</span></div></div>
    </div>`;
  }

  private renderTriad() {
    return html`<svg class="triad" width="74" height="58" viewBox="0 0 74 58">
      <path d="M17 12h22l6 14v14l-6 5M17 12 10 30M17 30h25M12 30l26-2" fill="none" stroke="#bcbcbc"/>
      <path d="M17 44 8 14" stroke="#2c9c2c" stroke-width="2"/><path d="M7 8l4 9-5 1z" fill="#2c9c2c"/>
      <path d="M17 44 20 14" stroke="#0a2cb8" stroke-width="2.400"/><path d="M21 6l3 10h-7z" fill="#0a2cb8"/>
      <path d="M17 46l40-3" stroke="#d83030" stroke-width="2"/><path d="M59 42l-9-3v7z" fill="#e02020"/>
      <circle cx="17" cy="46" r="4" fill="#e4e4e4" stroke="#aaa"/>
      <text x="19" y="8" font-family="Liberation Sans" font-size="10" fill="#3a4fe0">Z</text>
      <text x="2" y="13" font-family="Liberation Sans" font-size="10" fill="#2c9c2c">Y</text>
      <text x="62" y="49" font-family="Liberation Sans" font-size="10" fill="#e03030">X</text>
    </svg>`;
  }

  private renderWatermark() {
    return html`<div class="marktext">3D世界网</div>
      <div class="markurl">WWW.3DSJW.COM</div>
      <svg class="mark" width="72" height="82" viewBox="0 0 72 82">
        <polygon points="36,0 71,21 71,62 36,82 1,62 1,21" fill="#8fcbe8" opacity=".85"/>
        <path d="M36 0 71 21 71 40C60 25 50 12 36 0Z" fill="#85c7e8"/>
        <path d="M36 0 1 21V40C12 22 24 10 36 0Z" fill="#bcdcec"/>
        <path d="M1 21V62L20 50C10 40 6 32 1 21Z" fill="#a3d2ea"/>
        <path d="M71 62H71L36 82 52 55C60 55 66 52 71 40Z" fill="#69b7de"/>
        <path d="M36 82 1 62C20 62 35 62 52 58Z" fill="#7ccdf7"/>
        <polygon points="36,15 57,27 57,52 36,64 15,52 15,27" fill="none" stroke="#d3d3d3" stroke-width="4"/>
        <polygon points="36,26 50,34 36,42 22,34" fill="#a6d5ec"/>
        <polygon points="22,34 36,42 36,58 22,50" fill="#94cdea"/>
        <polygon points="50,34 36,42 36,58 50,50" fill="#6bb9e0"/>
      </svg>`;
  }

  override render() {
    return html`
      ${this.renderTitle()}
      ${this.renderTabs()}
      ${this.renderRibbon()}
      ${this.renderToolbar()}
      <div class="work">
        ${this.renderRail()}
        ${this.renderPanel()}
        <div class="view">
          <div class="vtabs"><div class="vtab">${I.tabPart}<span>3D.prt</span><span class="x">×</span></div></div>
          <div class="canvas"></div>
          ${this.renderModel()}
          ${this.renderTriad()}
          <div class="subtitle">一样的继续的单打独斗</div>
          ${this.renderDialog()}
        </div>
      </div>
      <div class="status">
        <span>选择对象并使用 MB3 ，或者双击某一对象</span>
        <span class="sp">
          <svg width="16" height="16" viewBox="0 0 16 16"><rect width="16" height="16" fill="#d8d8d8"/><path d="M4 3h9v7H4zM4 3v11" fill="#aaa" stroke="#777"/><path d="M5 4h2v2H5zM9 4h2v2H9zM7 6h2v2H7zM11 6h2v2h-2z" fill="#fff"/></svg>
          <svg width="16" height="16" viewBox="0 0 16 16"><path d="M1 4V1h3M12 1h3v3M15 12v3h-3M4 15H1v-3" fill="none" stroke="#888"/><rect x="3" y="3" width="10" height="10" fill="#fff" stroke="#557"/><rect x="4" y="6" width="8" height="6" fill="#6688cc"/></svg>
        </span>
      </div>
      <div class="taskbar">
        <svg class="orb" width="42" height="42" viewBox="0 0 42 42">
          <circle cx="21" cy="21" r="20.500" fill="#3a84b0" stroke="#173d5c"/>
          <path d="M10 10l10-3v7l-10 2z" fill="#e8552e"/><path d="M22 7l10 3v6l-10-2z" fill="#76b82a"/>
        </svg>
        ${[0, 1, 2, 3, 4].map(() => html`<div class="tbtn"></div>`)}
      </div>
      ${this.renderWatermark()}
    `;
  }
}
